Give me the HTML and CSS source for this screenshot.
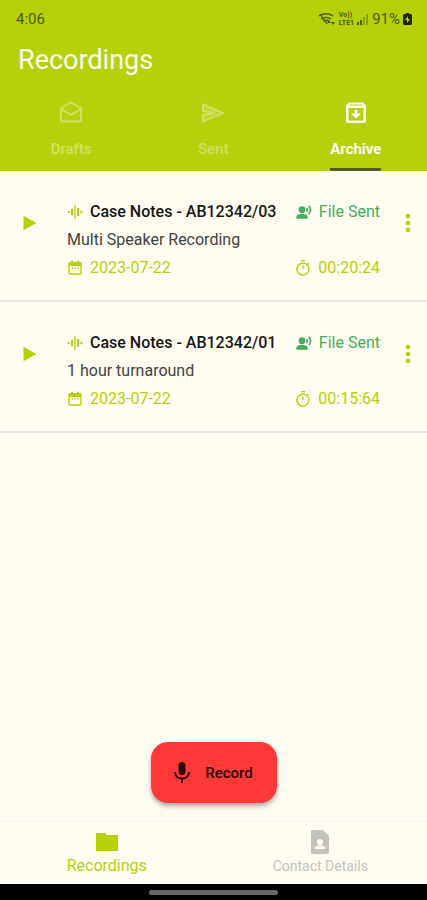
FILE: index.html
```html
<!DOCTYPE html>
<html lang="en">
<head>
<meta charset="utf-8">
<meta name="viewport" content="width=device-width, initial-scale=1">
<title>Recordings</title>
<link rel="stylesheet" href="styles.css">
</head>
<body>
<svg class="sprite" aria-hidden="true">
  <symbol id="play" viewBox="0 0 24 24"><path d="M6 4v16l14-8z"/></symbol>
  <symbol id="wave" viewBox="0 0 24 24"><path d="M1 10.500h3v3H1zM6 7h3v10H6zM11 1h2v22h-2zM15 6h3v12h-3zM20 10h3v4h-3z"/></symbol>
  <symbol id="voice" viewBox="0 0 24 24"><circle cx="9" cy="8.500" r="5"/><path d="M9 14.500c-2.700 0-8.500 1.300-8.500 4.500v3h17v-3C17.500 15.800 11.700 14.500 9 14.500zM16.800 5.400l-1.700 1.700c.8 1.200.8 2.700 0 3.900l1.700 1.700c2-2 2-5.200 0-7.300zM20.100 2l-1.600 1.600c2.800 3 2.800 7.600 0 10.900l1.600 1.600c3.900-4 3.900-10 0-14.100z"/></symbol>
  <symbol id="date" viewBox="0 0 24 24"><path d="M20 3h-2V1h-3v2H9V1H6v2H4a2 2 0 0 0-2 2v15a2 2 0 0 0 2 2h16a2 2 0 0 0 2-2V5a2 2 0 0 0-2-2zm0 17H4V9h16zM7 11h2v2H7zm4 0h2v2h-2zm4 0h2v2h-2z"/></symbol>
  <symbol id="timer" viewBox="0 0 24 24"><path d="M9 0h6v2H9zM11 8h2v6h-2zM19.500 7.200l1.500-1.500-1.500-1.500L18 5.700A10 10 0 1 0 19.500 7.200zM12 21.500a8 8 0 1 1 0-16 8 8 0 0 1 0 16z"/></symbol>
  <symbol id="more" viewBox="0 0 24 24"><circle cx="12" cy="4.500" r="2.500"/><circle cx="12" cy="12" r="2.500"/><circle cx="12" cy="19.500" r="2.500"/></symbol>
</svg>

<div class="app">
  <header class="top">
    <div class="status">
      <span>4:06</span>
      <div class="signals">
        <svg class="wifi" viewBox="0 0 18 14" aria-hidden="true"><path d="M1 4c4-3 10-3 14 0M3 7c3-2 7-2 10 0M5 9c2-1 4-1 6 0M2 2l7 10" fill="none" stroke="currentColor" stroke-width="1.300"/><path d="M9 11l2-3 2 3zM13 10h4l-2 3z"/></svg>
        <span class="volte"><span>Vo))</span><span>LTE1</span></span>
        <svg class="bars" viewBox="0 0 12 12" aria-hidden="true"><path d="M0 9h2v3H0zM3 7h2v5H3z"/><path opacity=".4" d="M6 4h2v8H6zM9 1h2v11H9z"/></svg>
        <span>91%</span>
        <svg class="battery" viewBox="0 0 9 12" aria-hidden="true"><path fill-rule="evenodd" d="M3 0h3v1h2l1 1v9l-1 1H1l-1-1V2l1-1h2zM5 3L2 7h2v3l3-4H5z"/></svg>
      </div>
    </div>
    <h1>Recordings</h1>
    <nav class="tabs" aria-label="Recording folders">
      <a href="#drafts"><svg viewBox="0 0 24 24" aria-hidden="true"><path d="M12 1.500L2 7.200V19a1.500 1.500 0 0 0 1.500 1.500h17A1.500 1.500 0 0 0 22 19V7.200zM3 8.500l9 5.500 9-5.500" fill="none" stroke="currentColor" stroke-width="2" stroke-linejoin="round"/></svg><span>Drafts</span></a>
      <a href="#sent"><svg viewBox="0 0 24 24" aria-hidden="true"><path d="M2 3.500L22 12 2 20.500V14l12-2-12-2z" fill="none" stroke="currentColor" stroke-width="2"/><path opacity=".4" d="M2 3.500L22 12 2 20.500V14l12-2-12-2z"/></svg><span>Sent</span></a>
      <a href="#archive" class="active" aria-current="page"><svg viewBox="0 0 24 24" aria-hidden="true"><path fill-rule="evenodd" d="M5 1.500h14l3 3V20a2 2 0 0 1-2 2H4a2 2 0 0 1-2-2V4.500zM5.500 3.500l-1 1h15l-1-1zM4.500 7v12.500h15V7zM10.500 9h3v3.500H17l-5 5-5-5h3.500z"/></svg><span>Archive</span></a>
    </nav>
  </header>

  <main>
    <ul class="list">
      <li class="row">
        <button class="icon-button" aria-label="Play AB12342/03"><svg class="play"><use href="#play"/></svg></button>
        <div class="details">
          <div class="line"><h2><svg><use href="#wave"/></svg>Case Notes - AB12342/03</h2><span class="sent"><svg><use href="#voice"/></svg>File Sent</span></div>
          <p class="line">Multi Speaker Recording</p>
          <div class="line meta"><span><svg><use href="#date"/></svg>2023-07-22</span><span><svg><use href="#timer"/></svg>00:20:24</span></div>
        </div>
        <button class="icon-button" aria-label="Options for AB12342/03"><svg class="more"><use href="#more"/></svg></button>
      </li>
      <li class="row">
        <button class="icon-button" aria-label="Play AB12342/01"><svg class="play"><use href="#play"/></svg></button>
        <div class="details">
          <div class="line"><h2><svg><use href="#wave"/></svg>Case Notes - AB12342/01</h2><span class="sent"><svg><use href="#voice"/></svg>File Sent</span></div>
          <p class="line">1 hour turnaround</p>
          <div class="line meta"><span><svg><use href="#date"/></svg>2023-07-22</span><span><svg><use href="#timer"/></svg>00:15:64</span></div>
        </div>
        <button class="icon-button" aria-label="Options for AB12342/01"><svg class="more"><use href="#more"/></svg></button>
      </li>
    </ul>
    <button class="record"><svg viewBox="0 0 24 24" aria-hidden="true"><rect x="8.500" y="1" width="7" height="13" rx="3.500"/><path d="M5 11c0 4 3 6.500 7 6.500s7-2.500 7-6.500M12 17v5" fill="none" stroke="currentColor" stroke-width="2"/></svg>Record</button>
  </main>

  <nav class="bottom" aria-label="Main">
    <a href="#recordings" class="active" aria-current="page"><svg viewBox="0 0 24 24" aria-hidden="true"><path d="M1 3h9l2 2h11v16H1z"/></svg><span>Recordings</span></a>
    <a href="#contact"><svg viewBox="0 0 24 24" aria-hidden="true"><path fill-rule="evenodd" d="M4 0h11l6 6v16a2 2 0 0 1-2 2H4a1 1 0 0 1-1-1V1a1 1 0 0 1 1-1zM12 9a3 3 0 1 0 0 6 3 3 0 0 0 0-6zM7 19h10v-1c0-2-3-2.500-5-2.500s-5 .5-5 2.500z"/></svg><span>Contact Details</span></a>
  </nav>
  <div class="system"><div class="handle"></div></div>
</div>
</body>
</html>
```
FILE: styles.css
```css
:root {
  --lime: #b5d10b;
  --cream: #fffcf1;
  --green: #43ad5b;
}

* { box-sizing: border-box; }

body {
  margin: 0;
  background: var(--cream);
  color: #161616;
  font: 16px/28px Roboto, sans-serif;
}

h1, h2, p, ul { margin: 0; padding: 0; font-weight: 400; }
a { color: inherit; text-decoration: none; }
button { border: 0; font: inherit; cursor: pointer; }
svg { flex: none; fill: currentColor; }
.sprite { display: none; }

.app {
  display: flex;
  flex-direction: column;
  min-height: 100vh;
}

.top { background: var(--lime); }

.status {
  display: flex;
  justify-content: space-between;
  align-items: center;
  height: 38px;
  padding: 0 15px 0 16px;
  color: #4c5a0c;
  font-size: 15px;
}

.signals { display: flex; align-items: center; gap: 3px; }
.wifi { width: 18px; height: 14px; }
.volte {
  display: grid;
  font-size: 7px;
  font-weight: 700;
  line-height: 8px;
}
.bars { width: 12px; height: 12px; }
.battery { width: 9px; height: 12px; color: #20280a; }

h1 {
  padding: 4px 18px;
  color: var(--cream);
  font-size: 27px;
  line-height: 36px;
}

.tabs {
  display: grid;
  grid-template-columns: repeat(3, 1fr);
  justify-items: center;
  padding-top: 19px;
  color: #d0e161;
  font-size: 15px;
  font-weight: 500;
}
.tabs a {
  display: flex;
  flex-direction: column;
  align-items: center;
  gap: 10px;
  height: 70px;
  border-bottom: 3px solid transparent;
}
.tabs svg { width: 24px; height: 24px; }
.tabs .active { color: var(--cream); border-color: #515e12; font-weight: 700; }

main {
  display: flex;
  flex: 1;
  flex-direction: column;
  justify-content: space-between;
  align-items: center;
  padding-bottom: 18px;
}

.list { width: 100%; list-style: none; }
.row {
  display: grid;
  grid-template-columns: 58px minmax(0, 1fr) 38px;
  column-gap: 9px;
  align-items: start;
  padding: 27px 0 18px;
  border-bottom: 2px solid #e8e6de;
}

.icon-button {
  display: grid;
  place-items: center;
  height: 50px;
  padding: 0;
  background: none;
  color: var(--lime);
}
.play, .more { width: 22px; height: 22px; }

.line {
  display: flex;
  justify-content: space-between;
  align-items: center;
  height: 28px;
  color: #424242;
  white-space: nowrap;
}
.line h2 { color: #161616; font-size: 16px; font-weight: 500; line-height: 28px; }
.line h2, .line span { display: flex; align-items: center; gap: 7px; }
.line svg { width: 16px; height: 16px; }
.line h2 svg, .meta { color: var(--lime); }
.line .sent { color: var(--green); }

.record {
  display: flex;
  justify-content: center;
  align-items: center;
  gap: 11px;
  width: 126px;
  height: 61px;
  padding: 0 4px 0 0;
  border-radius: 17px;
  background: #ff3838;
  box-shadow: 0 3px 5px #0005;
  color: #2b0a06;
  font-size: 15px;
  font-weight: 500;
}
.record svg { width: 24px; height: 24px; }

.bottom {
  display: grid;
  grid-template-columns: 1fr 1fr;
  height: 63px;
  padding-top: 8px;
  border-top: 1px solid #f8f6ed;
  color: #c4c4be;
  font-size: 14px;
  line-height: 24px;
}
.bottom a {
  display: flex;
  flex-direction: column;
  align-items: center;
}
.bottom svg { width: 24px; height: 24px; }
.bottom .active { color: var(--lime); font-size: 16px; }

.system {
  display: grid;
  place-items: center;
  height: 16px;
  background: #000;
}
.handle {
  width: 30%;
  height: 5px;
  border-radius: 3px;
  background: #666;
}
```
